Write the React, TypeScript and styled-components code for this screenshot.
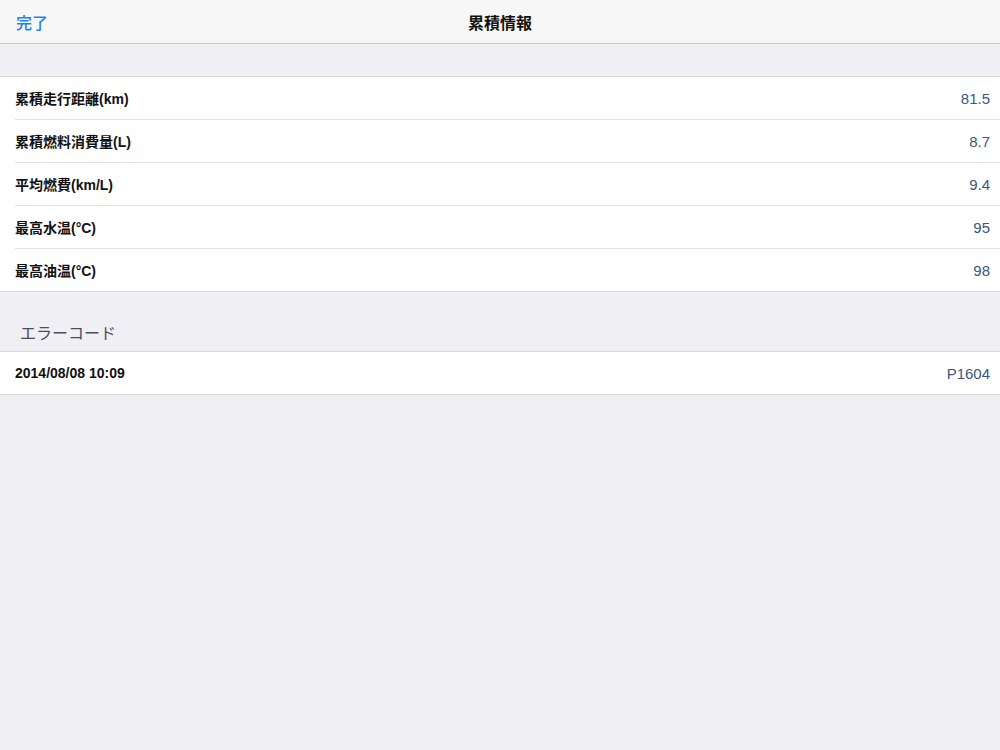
import styled, { createGlobalStyle } from "styled-components";

const GlobalStyle = createGlobalStyle`
  html, body {
    margin: 0;
    padding: 0;
    background: #efeff4;
    font-family: "Liberation Sans", "Noto Sans CJK JP", sans-serif;
    -webkit-font-smoothing: antialiased;
  }
`;

const Page = styled.div`
  width: 1000px;
  height: 750px;
  background: #efeff4;
  display: flex;
  flex-direction: column;
`;

const NavBar = styled.div`
  height: 43px;
  background: #f7f7f7;
  border-bottom: 1px solid #c8c7cc;
  display: grid;
  grid-template-columns: 1fr auto 1fr;
  align-items: center;
  padding: 0 16px;
`;

const NavButton = styled.span`
  font-size: 16px;
  color: #1a82fb;
  font-weight: 500;
  justify-self: start;
`;

const NavTitle = styled.span`
  font-size: 16px;
  font-weight: 700;
  color: #111;
`;

const Section = styled.div<{ $top: number }>`
  margin-top: ${(p) => p.$top}px;
  background: #fff;
  border-top: 1px solid #d9d9de;
  border-bottom: 1px solid #d9d9de;
`;

const SectionHeader = styled.div`
  padding: 31px 20px 6px;
  font-size: 16px;
  color: #4d4d5a;
  line-height: 22px;
`;

const Row = styled.div<{ $last?: boolean }>`
  height: 42px;
  margin-left: 15px;
  padding-right: 10px;
  display: flex;
  align-items: center;
  justify-content: space-between;
  border-bottom: ${(p) => (p.$last ? "none" : "1px solid #e0e0e4")};
`;

const Label = styled.span`
  font-size: 14px;
  font-weight: 700;
  color: #111;
`;

const Value = styled.span`
  font-size: 15px;
  color: #3a5485;
`;

const stats = [
  { label: "累積走行距離(km)", value: "81.5" },
  { label: "累積燃料消費量(L)", value: "8.7" },
  { label: "平均燃費(km/L)", value: "9.4" },
  { label: "最高水温(°C)", value: "95" },
  { label: "最高油温(°C)", value: "98" },
];

export default function App() {
  return (
    <>
      <GlobalStyle />
      <Page>
        <NavBar>
          <NavButton>完了</NavButton>
          <NavTitle>累積情報</NavTitle>
          <span />
        </NavBar>

        <Section $top={32}>
          {stats.map((s, i) => (
            <Row key={s.label} $last={i === stats.length - 1}>
              <Label>{s.label}</Label>
              <Value>{s.value}</Value>
            </Row>
          ))}
        </Section>

        <SectionHeader>エラーコード</SectionHeader>
        <Section $top={0}>
          <Row $last>
            <Label>2014/08/08 10:09</Label>
            <Value>P1604</Value>
          </Row>
        </Section>
      </Page>
    </>
  );
}
